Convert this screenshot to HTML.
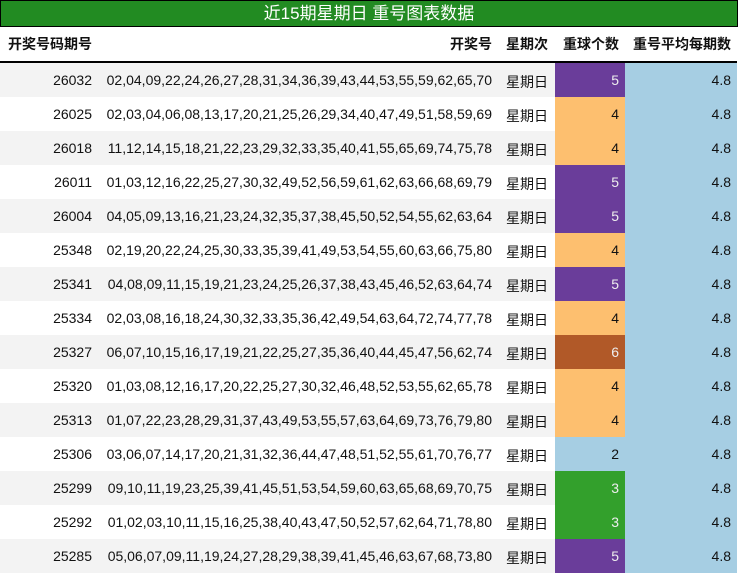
<!DOCTYPE html><html><head><meta charset="utf-8"><style>
body{margin:0;width:738px;height:574px;overflow:hidden;background:#fff;font-family:"Liberation Sans","Noto Sans CJK SC",sans-serif;font-size:14px;color:#111}
.t{position:absolute;left:0;top:0;width:736px;height:25px;background:#228b22;border:1px solid #000;color:#fff;font-size:17px;text-align:center;line-height:26px}
table{position:absolute;left:0;top:27px;border-collapse:collapse;table-layout:fixed;width:737px}
td,th{padding:0 6px;height:34px;white-space:nowrap}
th{font-weight:bold;height:34px;border-bottom:2px solid #000}
tr:nth-child(even) td{background:#f3f3f3}
.r{text-align:right}.l{text-align:left}
td.c3{padding-left:8px;padding-top:3px;height:31px}
td.b{background:#a6cee3!important;text-align:right}
td.p{background:#6a3d9a!important;color:#eee;text-align:right}
td.o{background:#fdbf6f!important;text-align:right}
td.n{background:#b15928!important;color:#eee;text-align:right}
td.g{background:#33a02c!important;color:#eee;text-align:right}
td.k{background:#a6cee3!important;text-align:right}
</style></head><body>
<div class="t">近15期星期日 重号图表数据</div>
<table>
<colgroup><col style="width:98px"><col style="width:400px"><col style="width:57px"><col style="width:70px"><col style="width:112px"></colgroup>
<tr><th class="l" style="padding-left:8px">开奖号码期号</th><th class="r">开奖号</th><th class="l" style="padding-left:8px">星期次</th><th class="r">重球个数</th><th class="r">重号平均每期数</th></tr>
<tr><td class="r">26032</td><td class="r">02,04,09,22,24,26,27,28,31,34,36,39,43,44,53,55,59,62,65,70</td><td class="c3">星期日</td><td class="p">5</td><td class="b">4.8</td></tr>
<tr><td class="r">26025</td><td class="r">02,03,04,06,08,13,17,20,21,25,26,29,34,40,47,49,51,58,59,69</td><td class="c3">星期日</td><td class="o">4</td><td class="b">4.8</td></tr>
<tr><td class="r">26018</td><td class="r">11,12,14,15,18,21,22,23,29,32,33,35,40,41,55,65,69,74,75,78</td><td class="c3">星期日</td><td class="o">4</td><td class="b">4.8</td></tr>
<tr><td class="r">26011</td><td class="r">01,03,12,16,22,25,27,30,32,49,52,56,59,61,62,63,66,68,69,79</td><td class="c3">星期日</td><td class="p">5</td><td class="b">4.8</td></tr>
<tr><td class="r">26004</td><td class="r">04,05,09,13,16,21,23,24,32,35,37,38,45,50,52,54,55,62,63,64</td><td class="c3">星期日</td><td class="p">5</td><td class="b">4.8</td></tr>
<tr><td class="r">25348</td><td class="r">02,19,20,22,24,25,30,33,35,39,41,49,53,54,55,60,63,66,75,80</td><td class="c3">星期日</td><td class="o">4</td><td class="b">4.8</td></tr>
<tr><td class="r">25341</td><td class="r">04,08,09,11,15,19,21,23,24,25,26,37,38,43,45,46,52,63,64,74</td><td class="c3">星期日</td><td class="p">5</td><td class="b">4.8</td></tr>
<tr><td class="r">25334</td><td class="r">02,03,08,16,18,24,30,32,33,35,36,42,49,54,63,64,72,74,77,78</td><td class="c3">星期日</td><td class="o">4</td><td class="b">4.8</td></tr>
<tr><td class="r">25327</td><td class="r">06,07,10,15,16,17,19,21,22,25,27,35,36,40,44,45,47,56,62,74</td><td class="c3">星期日</td><td class="n">6</td><td class="b">4.8</td></tr>
<tr><td class="r">25320</td><td class="r">01,03,08,12,16,17,20,22,25,27,30,32,46,48,52,53,55,62,65,78</td><td class="c3">星期日</td><td class="o">4</td><td class="b">4.8</td></tr>
<tr><td class="r">25313</td><td class="r">01,07,22,23,28,29,31,37,43,49,53,55,57,63,64,69,73,76,79,80</td><td class="c3">星期日</td><td class="o">4</td><td class="b">4.8</td></tr>
<tr><td class="r">25306</td><td class="r">03,06,07,14,17,20,21,31,32,36,44,47,48,51,52,55,61,70,76,77</td><td class="c3">星期日</td><td class="k">2</td><td class="b">4.8</td></tr>
<tr><td class="r">25299</td><td class="r">09,10,11,19,23,25,39,41,45,51,53,54,59,60,63,65,68,69,70,75</td><td class="c3">星期日</td><td class="g">3</td><td class="b">4.8</td></tr>
<tr><td class="r">25292</td><td class="r">01,02,03,10,11,15,16,25,38,40,43,47,50,52,57,62,64,71,78,80</td><td class="c3">星期日</td><td class="g">3</td><td class="b">4.8</td></tr>
<tr><td class="r">25285</td><td class="r">05,06,07,09,11,19,24,27,28,29,38,39,41,45,46,63,67,68,73,80</td><td class="c3">星期日</td><td class="p">5</td><td class="b">4.8</td></tr>
</table>
</body></html>
